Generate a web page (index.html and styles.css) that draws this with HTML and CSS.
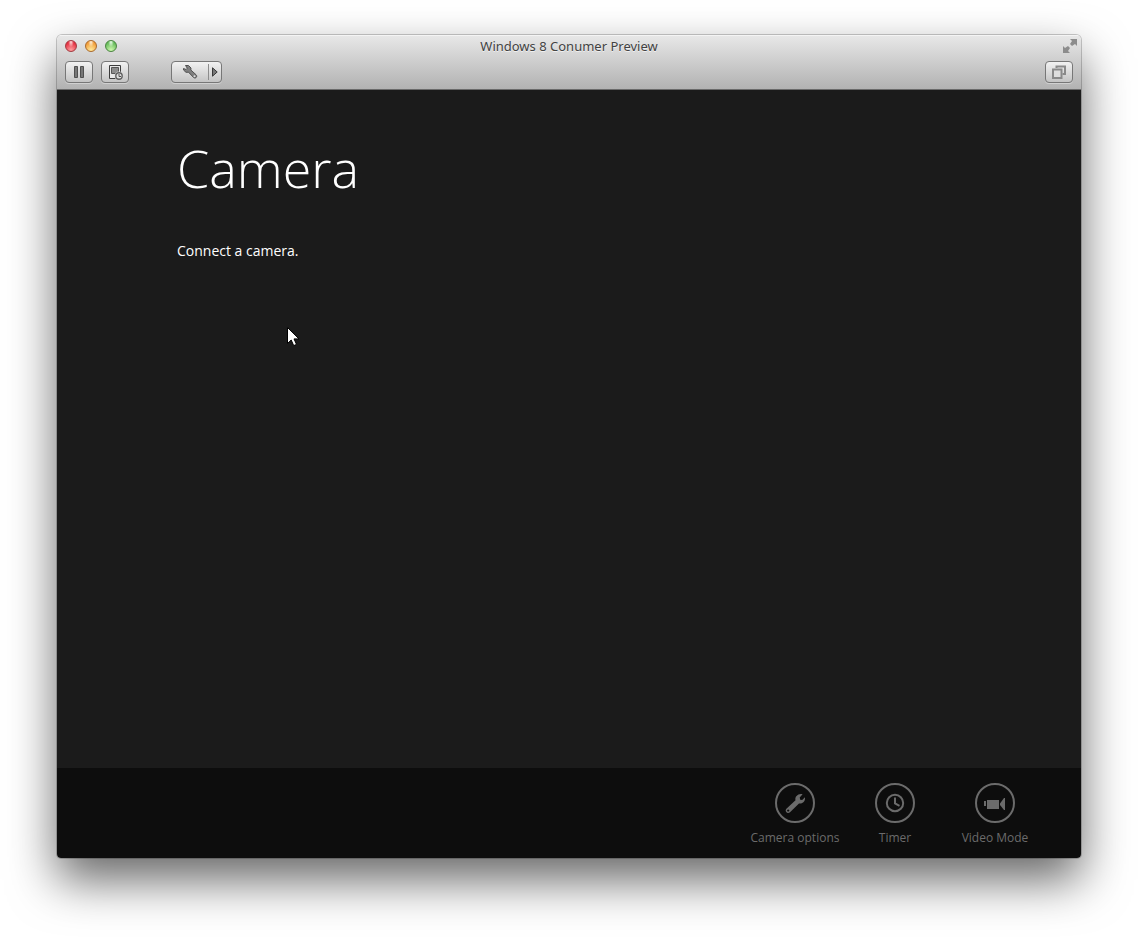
FILE: index.html
```html
<!DOCTYPE html>
<html lang="en">
<head>
<meta charset="utf-8">
<title>Windows 8 Conumer Preview</title>
<link rel="stylesheet" href="styles.css">
</head>
<body>
<div class="window">
  <header class="chrome">
    <div class="titlebar">
      <div class="lights">
        <button class="light red" aria-label="Close"></button>
        <button class="light amber" aria-label="Minimize"></button>
        <button class="light green" aria-label="Zoom"></button>
      </div>
      <div class="window-title">Windows 8 Conumer Preview</div>
      <button class="fullscreen" aria-label="Full screen">
        <svg width="14" height="14" viewBox="0 0 14 14" fill="#8c8c8c"><path d="M7 0h7v7l-2-2-3 2-2-2 2-3zM0 7l2 2 3-2 2 2-2 3 2 2H0z"/></svg>
      </button>
    </div>
    <div class="toolbar">
      <button class="tool" aria-label="Pause">
        <svg width="12" height="12" viewBox="0 0 12 12"><path d="M1.500.500h3v11h-3zM7.500.500h3v11h-3z" fill="#777" stroke="#505050"/></svg>
      </button>
      <button class="tool" aria-label="Snapshots">
        <svg width="16" height="16" viewBox="0 0 16 16"><path d="M2.500 1.500h11v13h-11z" fill="#e8e8e8" stroke="#3c3c3c"/><path d="M4.500 3.500h7v6h-7z" fill="#8c8c8c" stroke="#555"/><circle cx="12" cy="12" r="4.500" fill="#d8d8d8"/><circle cx="12" cy="12" r="3.200" fill="#ddd" stroke="#606060" stroke-width="1.400"/><path d="M12 10v2.500h2" fill="none" stroke="#505050"/></svg>
      </button>
      <div class="split">
        <button class="split-main" aria-label="Settings">
          <svg width="16" height="16" viewBox="0 0 16 16"><path d="M3.500 1.500h3l2.500 2.500-.2 2 5.200 4.700c1.900 1.800-.5 4.500-2.500 2.700L6.500 8.200 4 8.300 1.500 6V4.500L4 5.500l1.300-1.300z" fill="#808080" stroke="#505050"/><circle cx="12.500" cy="12.200" r="1" fill="#ddd"/></svg>
        </button>
        <button class="split-more" aria-label="More settings">
          <svg width="6" height="10" viewBox="0 0 6 10"><path d="M.5.800v8.400L5.200 5z" fill="#777" stroke="#383838"/></svg>
        </button>
      </div>
      <button class="tool last" aria-label="Unity view">
        <svg width="16" height="16" viewBox="0 0 16 16" fill="none" stroke="#8a8a8a" stroke-width="2"><path d="M5.500 4V2.500H14V10h-2.500"/><path d="M2 5.500h8.500V14H2z" fill="#dedede"/></svg>
      </button>
    </div>
  </header>
  <main class="screen">
    <h1>Camera</h1>
    <p>Connect a camera.</p>
    <svg class="pointer" width="13" height="20" viewBox="0 0 13 20"><path d="M.5.500v16l3.700-3.500 2.500 5.600 2.800-1.200L7 11.900h5z" fill="#fff" stroke="#000"/></svg>
  </main>
  <footer class="appbar">
    <button class="command">
      <svg width="40" height="40" viewBox="0 0 40 40" fill="#6b6b6b"><circle cx="20" cy="20" r="19" fill="none" stroke="#6b6b6b" stroke-width="2"/><path fill-rule="evenodd" d="M27.600 11.300 24.700 14.400 25.200 16.700 27.200 17 30 14.200C30.500 18.400 27.500 21 24 20.400L15 29.200C12.700 31.400 9.200 28.200 11.400 25.700L20.500 17.300C19.500 13.500 23.500 10 27.600 11.300zM13.200 26.400a1.100 1.100 0 1 0 .01 0z"/></svg>
      <span>Camera options</span>
    </button>
    <button class="command">
      <svg width="40" height="40" viewBox="0 0 40 40" fill="none" stroke="#6b6b6b" stroke-width="2"><circle cx="20" cy="20" r="19"/><circle cx="20" cy="20" r="8.200"/><path d="M20 14.500V20.500L24.500 22.800"/></svg>
      <span>Timer</span>
    </button>
    <button class="command">
      <svg width="40" height="40" viewBox="0 0 40 40" fill="#6b6b6b"><circle cx="20" cy="20" r="19" fill="none" stroke="#6b6b6b" stroke-width="2"/><path d="M12 17h12v9H12zM9 18h2v5H9zM30 15v12h-1l-4-5v-1.500l4-5.500z"/></svg>
      <span>Video Mode</span>
    </button>
  </footer>
</div>
</body>
</html>
```
FILE: styles.css
```css
* { box-sizing: border-box; }

body {
  margin: 0;
  min-height: 100vh;
  padding: 35px 57px 79px;
  display: flex;
  background: #fff;
  font-family: "Open Sans", "Noto Sans", sans-serif;
}

button {
  margin: 0;
  padding: 0;
  border: 0;
  background: none;
  font: inherit;
  color: inherit;
}

svg { display: block; }

.window {
  flex: 1;
  display: flex;
  flex-direction: column;
  border-radius: 5px 5px 4px 4px;
  overflow: hidden;
  box-shadow: 0 0 0 1px rgba(0, 0, 0, 0.2), 0 22px 48px rgba(0, 0, 0, 0.6);
}

.chrome {
  background: linear-gradient(#e8e8e8, #b2b2b2);
  border-bottom: 1px solid #6a6a6a;
  box-shadow: inset 0 1px #f4f4f4;
}

.titlebar {
  display: grid;
  grid-template-columns: 1fr auto 1fr;
  align-items: center;
  height: 22px;
  padding: 0 4px;
}

.lights {
  display: flex;
  gap: 8px;
  padding-left: 4px;
}

.light {
  width: 12px;
  height: 12px;
  border-radius: 50%;
  border: 1px solid;
}

.red {
  border-color: #a23a40;
  background: radial-gradient(ellipse at 50% 10%, #ffe4e4, transparent 40%), radial-gradient(circle at 50% 90%, #ffa0a0, #e32b3d 75%);
}

.amber {
  border-color: #a9692c;
  background: radial-gradient(ellipse at 50% 10%, #fff4e0, transparent 40%), radial-gradient(circle at 50% 90%, #ffeb9c, #f19a35 75%);
}

.green {
  border-color: #4a8440;
  background: radial-gradient(ellipse at 50% 10%, #effff0, transparent 40%), radial-gradient(circle at 50% 90%, #d0fab0, #62b957 75%);
}

.window-title {
  font-family: "Noto Sans", sans-serif;
  font-size: 13px;
  line-height: 20px;
  color: #424242;
  text-shadow: 0 1px #f0f0f0;
}

.fullscreen { justify-self: end; }

.toolbar {
  display: flex;
  gap: 8px;
  padding: 4px 8px 6px;
}

.tool,
.split {
  height: 22px;
  border: 1px solid #777;
  border-radius: 4px;
  background: linear-gradient(#f2f2f2, #c4c4c4);
  box-shadow: 0 1px rgba(255, 255, 255, 0.35);
}

.tool {
  width: 28px;
  display: grid;
  place-items: center;
}

.last { margin-left: auto; }

.split {
  display: flex;
  align-items: center;
  width: 51px;
  margin-left: 34px;
}

.split-main {
  flex: 1;
  display: grid;
  place-items: center;
}

.split-more {
  width: 13px;
  height: 16px;
  display: grid;
  place-items: center;
  border-left: 1px solid #8c8c8c;
}

.screen {
  position: relative;
  flex: 1;
  padding: 40px 120px;
  background: #1b1b1b;
  color: #fff;
}

h1 {
  margin: 0;
  font-size: 52px;
  font-weight: 300;
  line-height: 76px;
}

p {
  margin: 35px 0 0;
  font-size: 14px;
  line-height: 20px;
}

.pointer {
  position: absolute;
  left: 230px;
  top: 237px;
}

.appbar {
  display: flex;
  justify-content: flex-end;
  height: 90px;
  padding: 15px 36px 0;
  background: #0d0d0d;
  color: #6b6b6b;
}

.command {
  width: 100px;
  display: flex;
  flex-direction: column;
  align-items: center;
  gap: 7px;
  font-size: 12px;
  line-height: 16px;
}
```
